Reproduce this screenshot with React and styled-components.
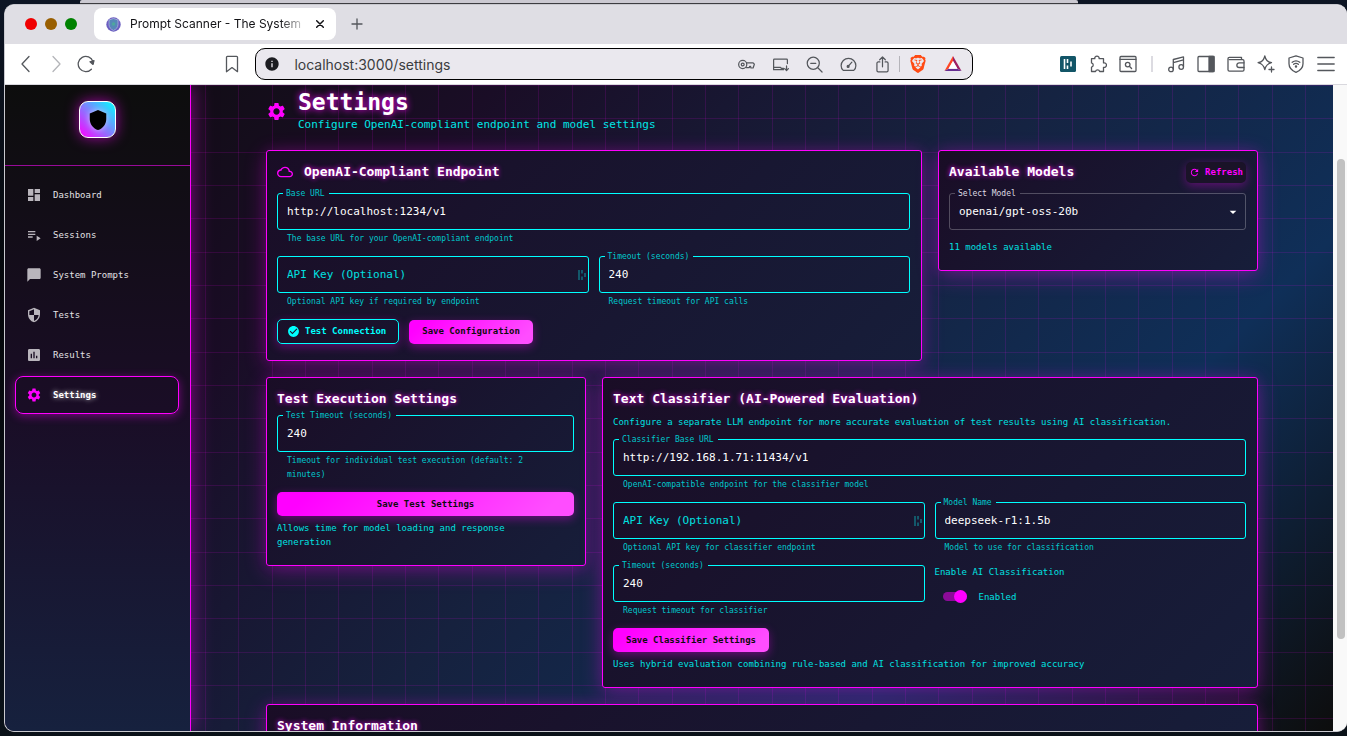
import React, { useState } from "react";
import styled, { createGlobalStyle, css } from "styled-components";
import {
  MdDashboard,
  MdPlaylistPlay,
  MdChatBubble,
  MdSecurity,
  MdAssessment,
  MdSettings,
  MdCloudQueue,
  MdRefresh,
  MdCheckCircle,
  MdArrowDropDown,
  MdShield,
  MdInfo,
} from "react-icons/md";
import { SiBrave } from "react-icons/si";

const MAGENTA = "#ff00ff";
const CYAN = "#00ffff";
const MONO = '"DejaVu Sans Mono", "Liberation Mono", monospace';
const UI = 'Inter, "Liberation Sans", sans-serif';

const GlobalStyle = createGlobalStyle`
  *, *::before, *::after { box-sizing: border-box; }
  body { margin: 0; background: #0b0d14; font-family: ${UI}; }
  h1, h2, p { margin: 0; }
  button, input, select { font-family: inherit; }
`;

/* ---------- Desktop and browser window ---------- */

const Desktop = styled.div`
  display: flex;
  flex-direction: column;
  height: 100vh;
  padding: 0 0 4px 4px;
  overflow: hidden;
  background: linear-gradient(180deg, #0d1524 0%, #05070b 40%, #0a1118 100%);
`;

const BackWindow = styled.div`
  flex: none;
  height: 4px;
  margin: 0 20% 0 76px;
  background: #cbc9d1;
  border-bottom: 1px solid #3c3c40;
  border-radius: 2px 2px 0 0;
`;

const Window = styled.div`
  flex: 1;
  min-height: 0;
  display: flex;
  flex-direction: column;
  overflow: hidden;
  border: 1px solid #c9c9cf;
  border-right: 0;
  border-radius: 10px;
  background: #ffffff;
`;

const TabStrip = styled.div`
  flex: none;
  display: flex;
  align-items: center;
  height: 39px;
  padding: 0 0 1px 20px;
  background: #dfdee4;
`;

const Lights = styled.div`
  display: flex;
  gap: 8px;
  margin-right: 17px;
`;

const Light = styled.button`
  width: 12px;
  height: 12px;
  padding: 0;
  border: 0;
  border-radius: 50%;
  background: ${(p) => p.$color};
`;

const Tab = styled.div`
  display: flex;
  align-items: center;
  width: 242px;
  height: 32px;
  padding: 0 8px 0 12px;
  border-radius: 8px;
  background: #ffffff;
`;

const TabTitle = styled.span`
  flex: 1;
  min-width: 0;
  margin-left: 9px;
  overflow: hidden;
  white-space: nowrap;
  font-size: 12px;
  line-height: 18px;
  color: #111114;
  mask-image: linear-gradient(90deg, #000 82%, transparent 98%);
`;

const IconButton = styled.button`
  flex: none;
  display: flex;
  align-items: center;
  justify-content: center;
  width: ${(p) => p.$w || 30}px;
  height: 30px;
  padding: 0;
  border: 0;
  background: none;
  color: ${(p) => p.$color || "#54575c"};
`;

const Toolbar = styled.div`
  flex: none;
  display: flex;
  align-items: center;
  height: 41px;
  padding: 0 6px;
  border-bottom: 1px solid #d9d8de;
  background: #ffffff;
`;

const Spacer = styled.div`
  flex: ${(p) => p.$grow} 1 0;
`;

const AddressBar = styled.div`
  flex: 0 1 718px;
  display: flex;
  align-items: center;
  height: 32px;
  margin-left: 8px;
  padding: 0 2px 0 8px;
  border: 1px solid #000000;
  border-radius: 10px;
  background: #eae8ee;
`;

const Address = styled.input`
  flex: 1;
  min-width: 0;
  margin-left: 14px;
  padding: 0;
  border: 0;
  outline: 0;
  background: none;
  font-size: 14px;
  color: #3b3c40;
`;

const Divider = styled.span`
  flex: none;
  width: ${(p) => p.$w}px;
  height: 16px;
  margin: 0 ${(p) => p.$gap}px;
  background: ${(p) => p.$color};
`;

/* ---------- Page frame ---------- */

const Page = styled.div`
  flex: 1;
  min-height: 0;
  display: flex;
`;

const Site = styled.div`
  flex: 1;
  min-width: 0;
  display: flex;
  overflow: hidden;
  font-family: ${MONO};
  background:
    linear-gradient(
      180deg,
      rgba(255, 0, 255, 0.12) 0 1px, transparent 1px 33px,
      rgba(255, 0, 255, 0.12) 33px 34px, transparent 34px 67px,
      rgba(255, 0, 255, 0.12) 67px 68px, transparent 68px
    ) 0 0 / 100px 100px,
    linear-gradient(
      90deg,
      rgba(255, 0, 255, 0.12) 0 1px, transparent 1px 33px,
      rgba(255, 0, 255, 0.12) 33px 34px, transparent 34px 67px,
      rgba(255, 0, 255, 0.12) 67px 68px, transparent 68px
    ) 0 0 / 100px 100px,
    linear-gradient(135deg, #0d0d0d 0%, #1a0d26 25%, #16213e 50%, #0f2f58 75%, #0d0d0d 100%);
`;

const ScrollTrack = styled.div`
  flex: none;
  width: 14px;
  padding: 74px 2px 0 4px;
  background: #f9f9f9;
`;

const ScrollThumb = styled.div`
  height: 84%;
  border-radius: 4px;
  background: #c1c1c1;
`;

const Sidebar = styled.aside`
  flex: none;
  width: 186px;
  border-right: 1px solid ${MAGENTA};
  background: linear-gradient(180deg, #0d0d0d 0%, #1a0d26 50%, #16213e 100%);
  box-shadow: 0 0 20px rgba(255, 0, 255, 0.5);
`;

const Brand = styled.div`
  display: flex;
  justify-content: center;
  padding: 16px 0 27px;
  border-bottom: 1px solid #990a99;
`;

const Logo = styled.a`
  display: flex;
  align-items: center;
  justify-content: center;
  width: 37px;
  height: 37px;
  border: 1px solid #ffffff;
  border-radius: 9px;
  background: linear-gradient(45deg, ${MAGENTA}, ${CYAN});
  box-shadow: 0 0 14px rgba(255, 0, 255, 0.6);
  color: #000000;

  svg { filter: drop-shadow(0 0 3px rgba(255, 255, 255, 0.6)); }
`;

const Nav = styled.nav`
  display: flex;
  flex-direction: column;
  gap: 2px;
  padding: 10px 11px 10px 10px;
`;

const NavLink = styled.a`
  display: flex;
  align-items: center;
  gap: 11px;
  height: 38px;
  padding: 0 10px;
  border: 1px solid transparent;
  border-radius: 8px;
  color: #e4e2e6;
  font-size: 9px;
  line-height: 13px;
  text-decoration: none;

  svg { color: #b9b5bc; }

  ${(p) => p.$active && css`
    border-color: ${MAGENTA};
    box-shadow: 0 2px 10px rgba(255, 0, 255, 0.4);
    color: #ffffff;
    font-weight: 700;
    text-shadow: 0 0 5px rgba(255, 255, 255, 0.8);
    svg { color: ${MAGENTA}; }
  `}
`;

const Main = styled.main`
  flex: 1;
  min-width: 0;
  overflow: hidden;
`;

const Container = styled.div`
  max-width: 1024px;
  margin: 0 auto;
  padding: 3px 16px 16px;
`;

const PageHeader = styled.header`
  display: flex;
  align-items: center;
  gap: 11px;
  margin-bottom: 16px;
  color: ${MAGENTA};
`;

const PageTitle = styled.h1`
  font-size: 23px;
  line-height: 28px;
  font-weight: 700;
  color: #ffffff;
  text-shadow: 0 0 7px ${MAGENTA};
`;

const PageSubtitle = styled.p`
  font-size: 11px;
  line-height: 18px;
  color: #00e6e6;
`;

/* ---------- Cards ---------- */

const CardGrid = styled.div`
  display: grid;
  grid-template-columns: repeat(3, minmax(0, 1fr));
  align-items: start;
  gap: 16px;
`;

const Card = styled.section`
  grid-column: span ${(p) => p.$span || 1};
  display: flex;
  flex-direction: column;
  gap: 10px;
  padding: 10px 11px 16px 10px;
  border: 1px solid ${MAGENTA};
  border-radius: 3px;
  background: linear-gradient(135deg, #1a0d26 0%, #16213e 120%);
  box-shadow: 0 5px 21px rgba(255, 0, 255, 0.3), 0 0 14px rgba(255, 0, 255, 0.1);
`;

const Stack = styled.div`
  display: flex;
  flex-direction: column;
  gap: 5px;
`;

const CardHead = styled.div`
  display: flex;
  align-items: center;
  gap: 11px;
  color: ${MAGENTA};
`;

const CardTitle = styled.h2`
  flex: 1;
  font-size: 13px;
  line-height: 22px;
  font-weight: 700;
  color: #ffffff;
  text-shadow: 0 0 5px ${MAGENTA};
`;

const Note = styled.p`
  padding-right: 12px;
  font-size: 9px;
  line-height: 14px;
  color: #00e0e0;
`;

const FieldGrid = styled.div`
  display: grid;
  grid-template-columns: repeat(2, minmax(0, 1fr));
  gap: 10px;
`;

const Outline = styled.fieldset`
  position: relative;
  display: flex;
  align-items: center;
  min-width: 0;
  height: 37px;
  margin: 0;
  padding: 0;
  border: 1px solid ${(p) => (p.$plain ? "rgba(255, 255, 255, 0.25)" : CYAN)};
  border-radius: 3px;
`;

const Legend = styled.legend`
  margin-left: 5px;
  padding: 0 4px 0 3px;
  font-size: 8px;
  line-height: 1px;
  color: ${(p) => (p.$plain ? "#dddbe2" : "#00c8cc")};
`;

const controlStyle = css`
  width: 100%;
  height: 35px;
  padding: 0 9px;
  border: 0;
  outline: 0;
  background: none;
  font-size: 11px;
  color: #ffffff;
`;

const TextInput = styled.input`
  ${controlStyle}
  &::placeholder { color: #00e0e0; opacity: 1; }
`;

const Select = styled.select`
  ${controlStyle}
  appearance: none;
`;

const EndIcon = styled.span`
  position: absolute;
  right: ${(p) => p.$right}px;
  top: 0;
  bottom: 0;
  display: flex;
  align-items: center;
  color: ${(p) => p.$color};
  pointer-events: none;
`;

const Helper = styled.p`
  margin: 2px 10px 0;
  font-size: 8px;
  line-height: 14px;
  color: #00c8cc;
`;

const Actions = styled.div`
  display: flex;
  align-items: center;
  gap: 10px;
`;

const buttonText = css`
  display: flex;
  align-items: center;
  justify-content: center;
  font-size: 9px;
  line-height: 13px;
  font-weight: 700;
  white-space: nowrap;
`;

const PrimaryButton = styled.button`
  ${buttonText}
  height: 24px;
  padding: 0 13px;
  border: 0;
  border-radius: 5px;
  background: linear-gradient(135deg, ${MAGENTA} 10%, #ff4dff 90%);
  box-shadow: 0 3px 10px rgba(255, 0, 255, 0.35);
  color: #0d0d0d;
`;

const OutlineButton = styled.button`
  ${buttonText}
  gap: 5px;
  height: 25px;
  padding: 0 12px 0 9px;
  border: 1px solid ${CYAN};
  border-radius: 5px;
  background: transparent;
  box-shadow: 0 3px 10px rgba(255, 0, 255, 0.3);
  color: ${CYAN};
`;

const RefreshButton = styled.button`
  ${buttonText}
  gap: 5px;
  height: 21px;
  padding: 0 3px;
  border: 0;
  border-radius: 5px;
  background: #1a1328;
  box-shadow: 0 3px 10px rgba(255, 0, 255, 0.3);
  color: ${MAGENTA};
`;

const SwitchLabel = styled.label`
  display: flex;
  align-items: center;
  gap: 12px;
  height: 25px;
  padding-left: 8px;
  font-size: 9px;
  color: #00e0e0;
`;

const Switch = styled.input`
  appearance: none;
  display: flex;
  align-items: center;
  justify-content: ${(p) => (p.checked ? "flex-end" : "flex-start")};
  width: 24px;
  height: 9px;
  margin: 0;
  border-radius: 5px;
  background: rgba(255, 0, 255, 0.5);

  &::after {
    content: "";
    flex: none;
    width: 13px;
    height: 13px;
    border-radius: 50%;
    background: ${MAGENTA};
  }
`;

/* ---------- Drawn icons ---------- */

const Stroke = ({ size = 18, width = 1.3, children }) => (
  <svg
    width={size}
    height={size}
    viewBox="0 0 18 18"
    fill="none"
    stroke="currentColor"
    strokeWidth={width}
    strokeLinecap="round"
    strokeLinejoin="round"
    aria-hidden="true"
  >
    {children}
  </svg>
);

const icons = {
  back: <path d="M12 1.5 5 9l7 7.5" />,
  forward: <path d="M6 1.5 13 9l-7 7.5" />,
  reload: (
    <>
      <path d="M14.4 14.2a7.6 7.6 0 1 1 1.6-7.6" />
      <path d="M13 6.8 17 5.6 16 9.4Z" fill="currentColor" />
    </>
  ),
  bookmark: <path d="M3.5 2.2c0-.5.4-.9.9-.9h9.2c.5 0 .9.4.9.9v14.5L9 12.6l-5.5 4.1Z" />,
  key: (
    <>
      <circle cx="5" cy="9" r="4.300" />
      <circle cx="5" cy="9" r="1.500" />
      <path d="M9 7.200h7l1.300 1.500-1.300 4h-2.300l-.4-1.700h-1l-.3 1.400H9" />
    </>
  ),
  install: (
    <>
      <path d="M16.3 8V4.200c0-.5-.4-.9-.9-.9H2.600c-.5 0-.9.4-.9.9v10.300h10.600" />
      <path d="M1.700 12h7l1.200 1h2.400" />
      <path d="M15.400 10.500v4.700M13.400 13.400l2 2 2-2" />
    </>
  ),
  zoomOut: (
    <>
      <circle cx="7.700" cy="7.700" r="6.400" />
      <path d="M12.500 12.500 17 17M5 7.700h5.400" />
    </>
  ),
  gauge: (
    <>
      <path d="M3.400 15.200C2 13.900 1.200 12.200 1.200 10.300a7.800 7.800 0 0 1 15.600 0c0 1.900-.8 3.600-2.200 4.900Z" />
      <path d="m8.600 11 4-4.500" />
      <circle cx="8.600" cy="11" r="1" fill="currentColor" />
    </>
  ),
  share: (
    <>
      <path d="M6.200 6.300H4.500c-.8 0-1.400.6-1.400 1.400v7.600c0 .8.6 1.400 1.400 1.400h9c.8 0 1.400-.6 1.400-1.400V7.700c0-.8-.6-1.400-1.400-1.400h-1.700" />
      <path d="M9 11.500V1.200M6 4l3-3 3 3" />
    </>
  ),
  puzzle: (
    <path d="M2.500 3.700h3.300a2.200 2.200 0 1 1 4.300 0h4.400v4.200a2.300 2.300 0 1 1 0 4.400v4.200h-3.800a2.200 2.200 0 0 0-4.200 0H2.500v-4.300a2.200 2.200 0 0 0 0-4.300Z" />
  ),
  pageSearch: (
    <>
      <rect x="1" y="1.500" width="16" height="15" rx="1" />
      <path d="M1 4.300h16" />
      <circle cx="8.700" cy="9.600" r="2.300" />
      <path d="m10.600 11.500 2 2" />
    </>
  ),
  music: (
    <>
      <path d="M6.300 14.200V4.500l10.200-2.700v9.700M6.300 7.600l10.200-2.700" />
      <circle cx="4" cy="14.400" r="2.300" />
      <circle cx="14.200" cy="12" r="2.300" />
    </>
  ),
  panel: (
    <>
      <rect x="1" y="1.500" width="16" height="15" rx="1" />
      <rect x="12" y="1.500" width="5" height="15" fill="currentColor" />
    </>
  ),
  wallet: (
    <>
      <path d="M14.500 4.600V2.300H2.400c-.8 0-1.400.6-1.400 1.400v11c0 .8.6 1.400 1.400 1.400h13.200c.8 0 1.400-.6 1.400-1.400V5.900c0-.8-.6-1.300-1.400-1.300H2.400" />
      <path d="M17 7.800h-4.800a2.300 2.300 0 0 0 0 4.700H17" />
    </>
  ),
  sparkle: (
    <>
      <path d="M7.800.8c1 4.300 2.400 5.800 6.700 6.900-4.300 1.200-5.700 2.700-6.700 6.900-1-4.200-2.400-5.700-6.700-6.900C5.400 6.600 6.800 5.100 7.800.8Z" />
      <path d="M14.500 12v5M12 14.500h5" />
    </>
  ),
  shield: (
    <>
      <path d="M9 .8 16 3v5.700c0 4.200-3 6.900-7 8.700-4-1.800-7-4.500-7-8.700V3Z" />
      <path d="M5.200 7.300c2.400-1.800 5.200-1.800 7.600 0M6.600 9.300c1.500-1.100 3.300-1.100 4.800 0" />
      <circle cx="9" cy="11.400" r=".6" fill="currentColor" />
    </>
  ),
  menu: <path d="M.8 2.500h16.400M.8 9h16.400M.8 15.500h16.400" />,
};

const VaultMark = () => (
  <svg width="16" height="16" viewBox="0 0 16 16" aria-hidden="true">
    <rect width="16" height="16" rx="1.500" fill="#125567" />
    <path d="M4.500 3v10M7.500 3v4M7.500 9.500V13M11 5.500v5" stroke="#fff" strokeWidth="1.600" />
  </svg>
);

const VaultHint = () => (
  <svg width="8" height="12" viewBox="0 0 8 12" fill="none" stroke="currentColor" strokeWidth="1.700" aria-hidden="true">
    <path d="M1 1v10M4 1v3.500M4 7.500V11M7 4v4" />
  </svg>
);

const Favicon = () => (
  <svg width="15" height="15" viewBox="0 0 15 15" aria-hidden="true">
    <circle cx="7.500" cy="7.500" r="7.200" fill="#6a5fc0" />
    <path d="M7.500 1.500 12 3v4.500c0 3-2 4.700-4.500 6-2.500-1.300-4.500-3-4.500-6V3Z" fill="#5787b8" stroke="#b9b3e4" strokeWidth=".7" />
    <circle cx="7.500" cy="7" r="1.800" fill="#4ea79d" />
  </svg>
);

const TokenMark = () => (
  <svg width="18" height="18" viewBox="0 0 18 18" aria-hidden="true">
    <path d="M9 1 .5 16l4-2.300L9 6Z" fill="#ff4724" />
    <path d="M9 1v5l4.500 7.700 4 2.300Z" fill="#9e1f63" />
    <path d="M.5 16h17l-4-2.300h-9Z" fill="#662d91" />
    <path d="M9 6 4.500 13.700h9Z" fill="#fff" />
  </svg>
);

/* ---------- Composed parts ---------- */

function Field({ id, label, value, helper, type = "text" }) {
  const [text, setText] = useState(value);
  return (
    <div>
      <Outline>
        <Legend>
          <label htmlFor={id}>{label}</label>
        </Legend>
        <TextInput id={id} type={type} value={text} onChange={(e) => setText(e.target.value)} />
      </Outline>
      <Helper>{helper}</Helper>
    </div>
  );
}

function KeyField({ helper }) {
  return (
    <div>
      <Outline>
        <TextInput type="password" aria-label="API Key (Optional)" placeholder="API Key (Optional)" />
        <EndIcon $right={2} $color="#136476">
          <VaultHint />
        </EndIcon>
      </Outline>
      <Helper>{helper}</Helper>
    </div>
  );
}

const navItems = [
  ["Dashboard", MdDashboard],
  ["Sessions", MdPlaylistPlay],
  ["System Prompts", MdChatBubble],
  ["Tests", MdSecurity],
  ["Results", MdAssessment],
  ["Settings", MdSettings],
];

const tools = [
  ["Music", "music"],
  ["Side panel", "panel"],
  ["Wallet", "wallet"],
  ["Assistant", "sparkle"],
  ["VPN", "shield"],
  ["Menu", "menu"],
];

const addressTools = [
  ["Passwords", "key"],
  ["Install", "install"],
  ["Zoom out", "zoomOut"],
  ["Speed", "gauge"],
  ["Share", "share"],
];

function BrowserChrome() {
  return (
    <>
      <TabStrip>
        <Lights>
          <Light $color="#f00000" aria-label="Close window" />
          <Light $color="#995f00" aria-label="Minimise window" />
          <Light $color="#008200" aria-label="Zoom window" />
        </Lights>
        <Tab>
          <Favicon />
          <TabTitle>Prompt Scanner - The System</TabTitle>
          <IconButton $w={16} $color="#111114" aria-label="Close tab">
            <Stroke size={12} width={2.2}><path d="m4 4 10 10M14 4 4 14" /></Stroke>
          </IconButton>
        </Tab>
        <IconButton $w={42} aria-label="New tab">
          <Stroke size={12} width={2}><path d="M9 1.500v15M1.500 9h15" /></Stroke>
        </IconButton>
      </TabStrip>
      <Toolbar>
        <IconButton aria-label="Back"><Stroke>{icons.back}</Stroke></IconButton>
        <IconButton $color="#b4b5b9" aria-label="Forward"><Stroke>{icons.forward}</Stroke></IconButton>
        <IconButton aria-label="Reload"><Stroke>{icons.reload}</Stroke></IconButton>
        <Spacer $grow={19} />
        <IconButton aria-label="Bookmark"><Stroke>{icons.bookmark}</Stroke></IconButton>
        <AddressBar>
          <MdInfo size={16} color="#1c1d21" />
          <Address aria-label="Address" defaultValue="localhost:3000/settings" />
          {addressTools.map(([name, icon]) => (
            <IconButton key={icon} $w={34} aria-label={name}>
              <Stroke size={17}>{icons[icon]}</Stroke>
            </IconButton>
          ))}
          <Divider $w={1} $gap={0} $color="#b5b4ba" />
          <IconButton $w={36} $color="#ff4a13" aria-label="Shields"><SiBrave size={18} /></IconButton>
          <IconButton $w={34} aria-label="Rewards"><TokenMark /></IconButton>
        </AddressBar>
        <Spacer $grow={13} />
        <IconButton aria-label="Vault"><VaultMark /></IconButton>
        <IconButton aria-label="Extensions"><Stroke>{icons.puzzle}</Stroke></IconButton>
        <IconButton aria-label="Search page"><Stroke>{icons.pageSearch}</Stroke></IconButton>
        <Divider $w={2} $gap={8} $color="#dcdbe1" />
        {tools.map(([name, icon]) => (
          <IconButton key={icon} aria-label={name}><Stroke>{icons[icon]}</Stroke></IconButton>
        ))}
      </Toolbar>
    </>
  );
}

export default function App() {
  const [aiOn, setAiOn] = useState(true);

  return (
    <Desktop>
      <GlobalStyle />
      <BackWindow />
      <Window>
        <BrowserChrome />
        <Page>
          <Site>
            <Sidebar>
              <Brand>
                <Logo href="#home" aria-label="Home"><MdShield size={22} /></Logo>
              </Brand>
              <Nav>
                {navItems.map(([name, Icon]) => (
                  <NavLink key={name} href={"#" + name.toLowerCase().replace(" ", "-")} $active={name === "Settings"}>
                    <Icon size={16} />
                    {name}
                  </NavLink>
                ))}
              </Nav>
            </Sidebar>
            <Main>
              <Container>
                <PageHeader>
                  <MdSettings size={21} />
                  <div>
                    <PageTitle>Settings</PageTitle>
                    <PageSubtitle>Configure OpenAI-compliant endpoint and model settings</PageSubtitle>
                  </div>
                </PageHeader>
                <CardGrid>
                  <Card $span={2}>
                    <CardHead>
                      <MdCloudQueue size={16} />
                      <CardTitle>OpenAI-Compliant Endpoint</CardTitle>
                    </CardHead>
                    <Field
                      id="base-url"
                      label="Base URL"
                      value="http://localhost:1234/v1"
                      helper="The base URL for your OpenAI-compliant endpoint"
                    />
                    <FieldGrid>
                      <KeyField helper="Optional API key if required by endpoint" />
                      <Field id="timeout" label="Timeout (seconds)" value="240" helper="Request timeout for API calls" />
                    </FieldGrid>
                    <Actions>
                      <OutlineButton><MdCheckCircle size={13} />Test Connection</OutlineButton>
                      <PrimaryButton>Save Configuration</PrimaryButton>
                    </Actions>
                  </Card>

                  <Card>
                    <CardHead>
                      <CardTitle>Available Models</CardTitle>
                      <RefreshButton><MdRefresh size={11} />Refresh</RefreshButton>
                    </CardHead>
                    <Outline $plain>
                      <Legend $plain>
                        <label htmlFor="model">Select Model</label>
                      </Legend>
                      <Select id="model" defaultValue="openai/gpt-oss-20b">
                        <option>openai/gpt-oss-20b</option>
                      </Select>
                      <EndIcon $right={4} $color="#ffffff"><MdArrowDropDown size={16} /></EndIcon>
                    </Outline>
                    <Note>11 models available</Note>
                  </Card>

                  <Card>
                    <Stack>
                      <CardTitle>Test Execution Settings</CardTitle>
                      <Field
                        id="test-timeout"
                        label="Test Timeout (seconds)"
                        value="240"
                        helper="Timeout for individual test execution (default: 2 minutes)"
                      />
                    </Stack>
                    <Stack>
                      <PrimaryButton>Save Test Settings</PrimaryButton>
                      <Note>Allows time for model loading and response generation</Note>
                    </Stack>
                  </Card>

                  <Card $span={2}>
                    <Stack>
                      <CardTitle>Text Classifier (AI-Powered Evaluation)</CardTitle>
                      <Note>
                        Configure a separate LLM endpoint for more accurate evaluation of test results using AI classification.
                      </Note>
                    </Stack>
                    <Field
                      id="classifier-url"
                      label="Classifier Base URL"
                      value="http://192.168.1.71:11434/v1"
                      helper="OpenAI-compatible endpoint for the classifier model"
                    />
                    <FieldGrid>
                      <KeyField helper="Optional API key for classifier endpoint" />
                      <Field id="model-name" label="Model Name" value="deepseek-r1:1.5b" helper="Model to use for classification" />
                      <Field id="classifier-timeout" label="Timeout (seconds)" value="240" helper="Request timeout for classifier" />
                      <Stack>
                        <Note>Enable AI Classification</Note>
                        <SwitchLabel>
                          <Switch type="checkbox" checked={aiOn} onChange={(e) => setAiOn(e.target.checked)} />
                          {aiOn ? "Enabled" : "Disabled"}
                        </SwitchLabel>
                      </Stack>
                    </FieldGrid>
                    <Stack>
                      <Actions>
                        <PrimaryButton>Save Classifier Settings</PrimaryButton>
                      </Actions>
                      <Note>
                        Uses hybrid evaluation combining rule-based and AI classification for improved accuracy
                      </Note>
                    </Stack>
                  </Card>

                  <Card $span={3}>
                    <CardTitle>System Information</CardTitle>
                  </Card>
                </CardGrid>
              </Container>
            </Main>
          </Site>
          <ScrollTrack>
            <ScrollThumb />
          </ScrollTrack>
        </Page>
      </Window>
    </Desktop>
  );
}
